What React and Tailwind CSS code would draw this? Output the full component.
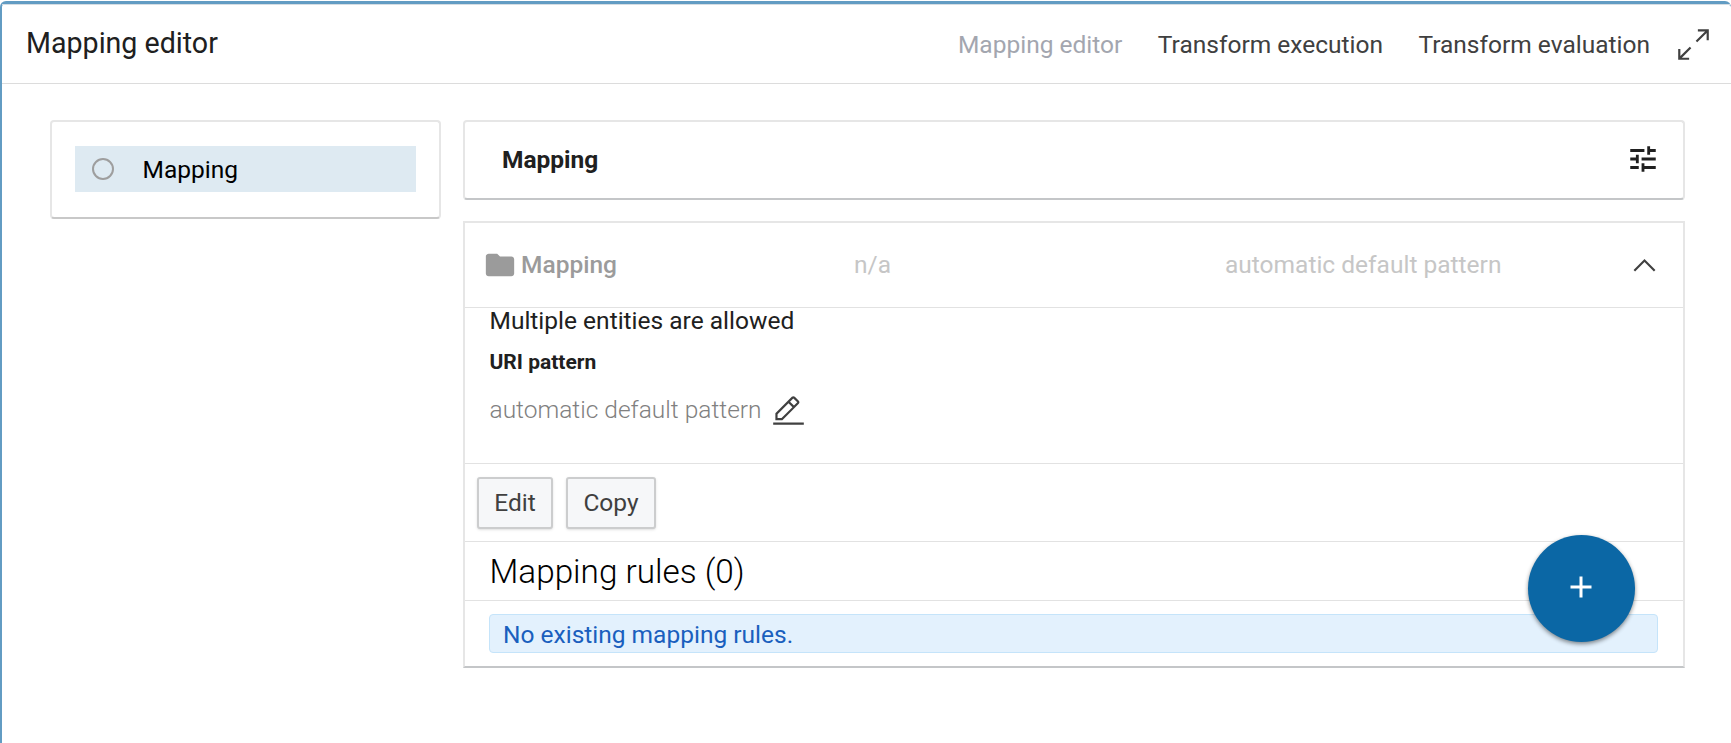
function Icon({ className, size = 35, box = 32, children }) {
  return (
    <svg className={className} width={size} height={size} viewBox={`0 0 ${box} ${box}`} fill="currentColor" aria-hidden="true">
      {children}
    </svg>
  );
}

function Header() {
  return (
    <header className="flex h-20 shrink-0 items-start border-t border-b border-t-[#d5dde3] border-b-[#dcdcdc] pr-5 pl-6">
      <h1 className="mt-[18px] text-[28.6px] leading-10 text-[#202020]">Mapping editor</h1>
      <nav className="mt-5 ml-auto flex gap-[35.5px] text-[24.5px] leading-10 whitespace-nowrap text-[#404040]">
        <span className="text-[#a3a6af]">Mapping editor</span>
        <span>Transform execution</span>
        <span>Transform evaluation</span>
      </nav>
      <Icon className="mt-[22px] ml-[26px] shrink-0 text-[#404040]">
        <path d="M20 2V4H26.586L18 12.582 19.414 14 28 5.414V12H30V2zM14 19.416L12.592 18 4 26.586V20H2V30H12V28H5.414z" />
      </Icon>
    </header>
  );
}

function Sidebar() {
  return (
    <aside className="h-[99px] w-[391px] shrink-0 rounded-[4px] border-2 border-[#e6e6e6] border-b-[#c8c8c8] px-[23px] pt-6">
      <div className="flex h-[46px] items-center bg-[#deeaf2] pl-[17px] text-[24.5px] text-black">
        <span className="-mt-px h-[22px] w-[22px] rounded-full border-2 border-[#9e9e9e]" />
        <span className="mt-px ml-[28.5px] leading-10">Mapping</span>
      </div>
    </aside>
  );
}

function MappingDetails() {
  return (
    <section className="relative mt-[21px] flex h-[447px] flex-col border-2 border-[#e6e6e6] border-b-[#c4c6c8]">
      <div className="flex h-[85px] items-center border-b border-[#e2e2e2] pr-[21px] pl-[18px] text-[24.5px]">
        <Icon className="text-[#9b9b9b]" size={34} box={24}>
          <path d="M10 4H4c-1.1 0-1.99.9-1.99 2L2 18c0 1.1.9 2 2 2h16c1.1 0 2-.9 2-2V8c0-1.1-.9-2-2-2h-8l-2-2z" />
        </Icon>
        <span className="ml-1 w-[333px] font-medium text-[#9b9b9b]">Mapping</span>
        <span className="w-[371px] text-[#c6c6c6]">n/a</span>
        <span className="text-[#c6c6c6]">automatic default pattern</span>
        <Icon className="ml-auto text-[#404040]">
          <path d="M16 10L26 20 24.6 21.4 16 12.8 7.4 21.4 6 20z" />
        </Icon>
      </div>
      <div className="h-[156px] border-b border-[#e2e2e2] pl-[24.5px]">
        <p className="h-[26px] text-[24.5px] leading-[26px] text-[#202020]">Multiple entities are allowed</p>
        <p className="mt-[13px] text-[21px] leading-[30px] font-bold text-[#202020]">URI pattern</p>
        <div className="mt-[13px] flex items-center">
          <span className="text-[24.5px] leading-10 font-light text-[#808080]">automatic default pattern</span>
          <Icon className="mt-[3px] ml-[9.5px] text-[#404040]">
            <path d="M2 26H30V28H2zM25.4 9c.8-.8.8-2 0-2.8l-3.6-3.6c-.8-.8-2-.8-2.8 0l-15 15V24h6.4L25.4 9zM20.4 4L24 7.6l-3 3L17.4 7 20.4 4zM6 22v-3.6l10-10 3.6 3.6-10 10H6z" />
          </Icon>
        </div>
      </div>
      <div className="flex h-[78px] items-center gap-[13px] border-b border-[#e2e2e2] pl-3 text-[24.5px] text-[#404040]">
        <button className="h-[52px] w-[76px] rounded-[3px] border-2 border-[#cccdce] bg-[#f6f7f9] pt-[2px] shadow-sm">Edit</button>
        <button className="h-[52px] w-[90px] rounded-[3px] border-2 border-[#cccdce] bg-[#f6f7f9] pt-[2px] shadow-sm">Copy</button>
      </div>
      <h2 className="h-[59px] border-b border-[#e2e2e2] pl-[24.5px] text-[33.3px] leading-[60px] font-light text-black">Mapping rules (0)</h2>
      <div className="mt-[13px] mr-[25px] ml-6 h-[39px] rounded-[4px] border border-[#c5e4fa] bg-[#e3f1fd] pl-[13px] text-[24.5px] leading-[39px] text-[#1a5fbe]">
        No existing mapping rules.
      </div>
      <button aria-label="Add" className="absolute right-[48.5px] bottom-6 flex h-[107px] w-[107px] items-center justify-center rounded-full bg-[#0b67a5] pb-[3px] text-white shadow-[0_2px_4px_rgba(0,0,0,0.45)]">
        <Icon size={36} box={24}>
          <path d="M19 13h-6v6h-2v-6H5v-2h6V5h2v6h6v2z" />
        </Icon>
      </button>
    </section>
  );
}

export default function App() {
  return (
    <div className="h-[743px] w-[1731px] overflow-hidden bg-white pt-px font-['Roboto',sans-serif]">
      <div className="flex h-[760px] flex-col rounded-t-[6px] border-t-[3px] border-l-2 border-[#629cc3] bg-white">
        <Header />
        <main className="flex gap-[22px] pt-9 pl-12">
          <Sidebar />
          <div className="w-[1222px]">
            <div className="flex h-[80px] items-center rounded-[4px] border-2 border-[#e6e6e6] border-b-[#c4c6c8] pr-[23px] pl-[37px]">
              <h2 className="text-[24.5px] font-bold text-[#202020]">Mapping</h2>
              <Icon className="-mt-[3px] ml-auto text-[#202020]" size={34} box={24}>
                <path d="M3 17v2h6v-2H3zM3 5v2h10V5H3zm10 16v-2h8v-2h-8v-2h-2v6h2zM7 9v2H3v2h4v2h2V9H7zm14 4v-2H11v2h10zm-6-4h2V7h4V5h-4V3h-2v6z" />
              </Icon>
            </div>
            <MappingDetails />
          </div>
        </main>
      </div>
    </div>
  );
}
